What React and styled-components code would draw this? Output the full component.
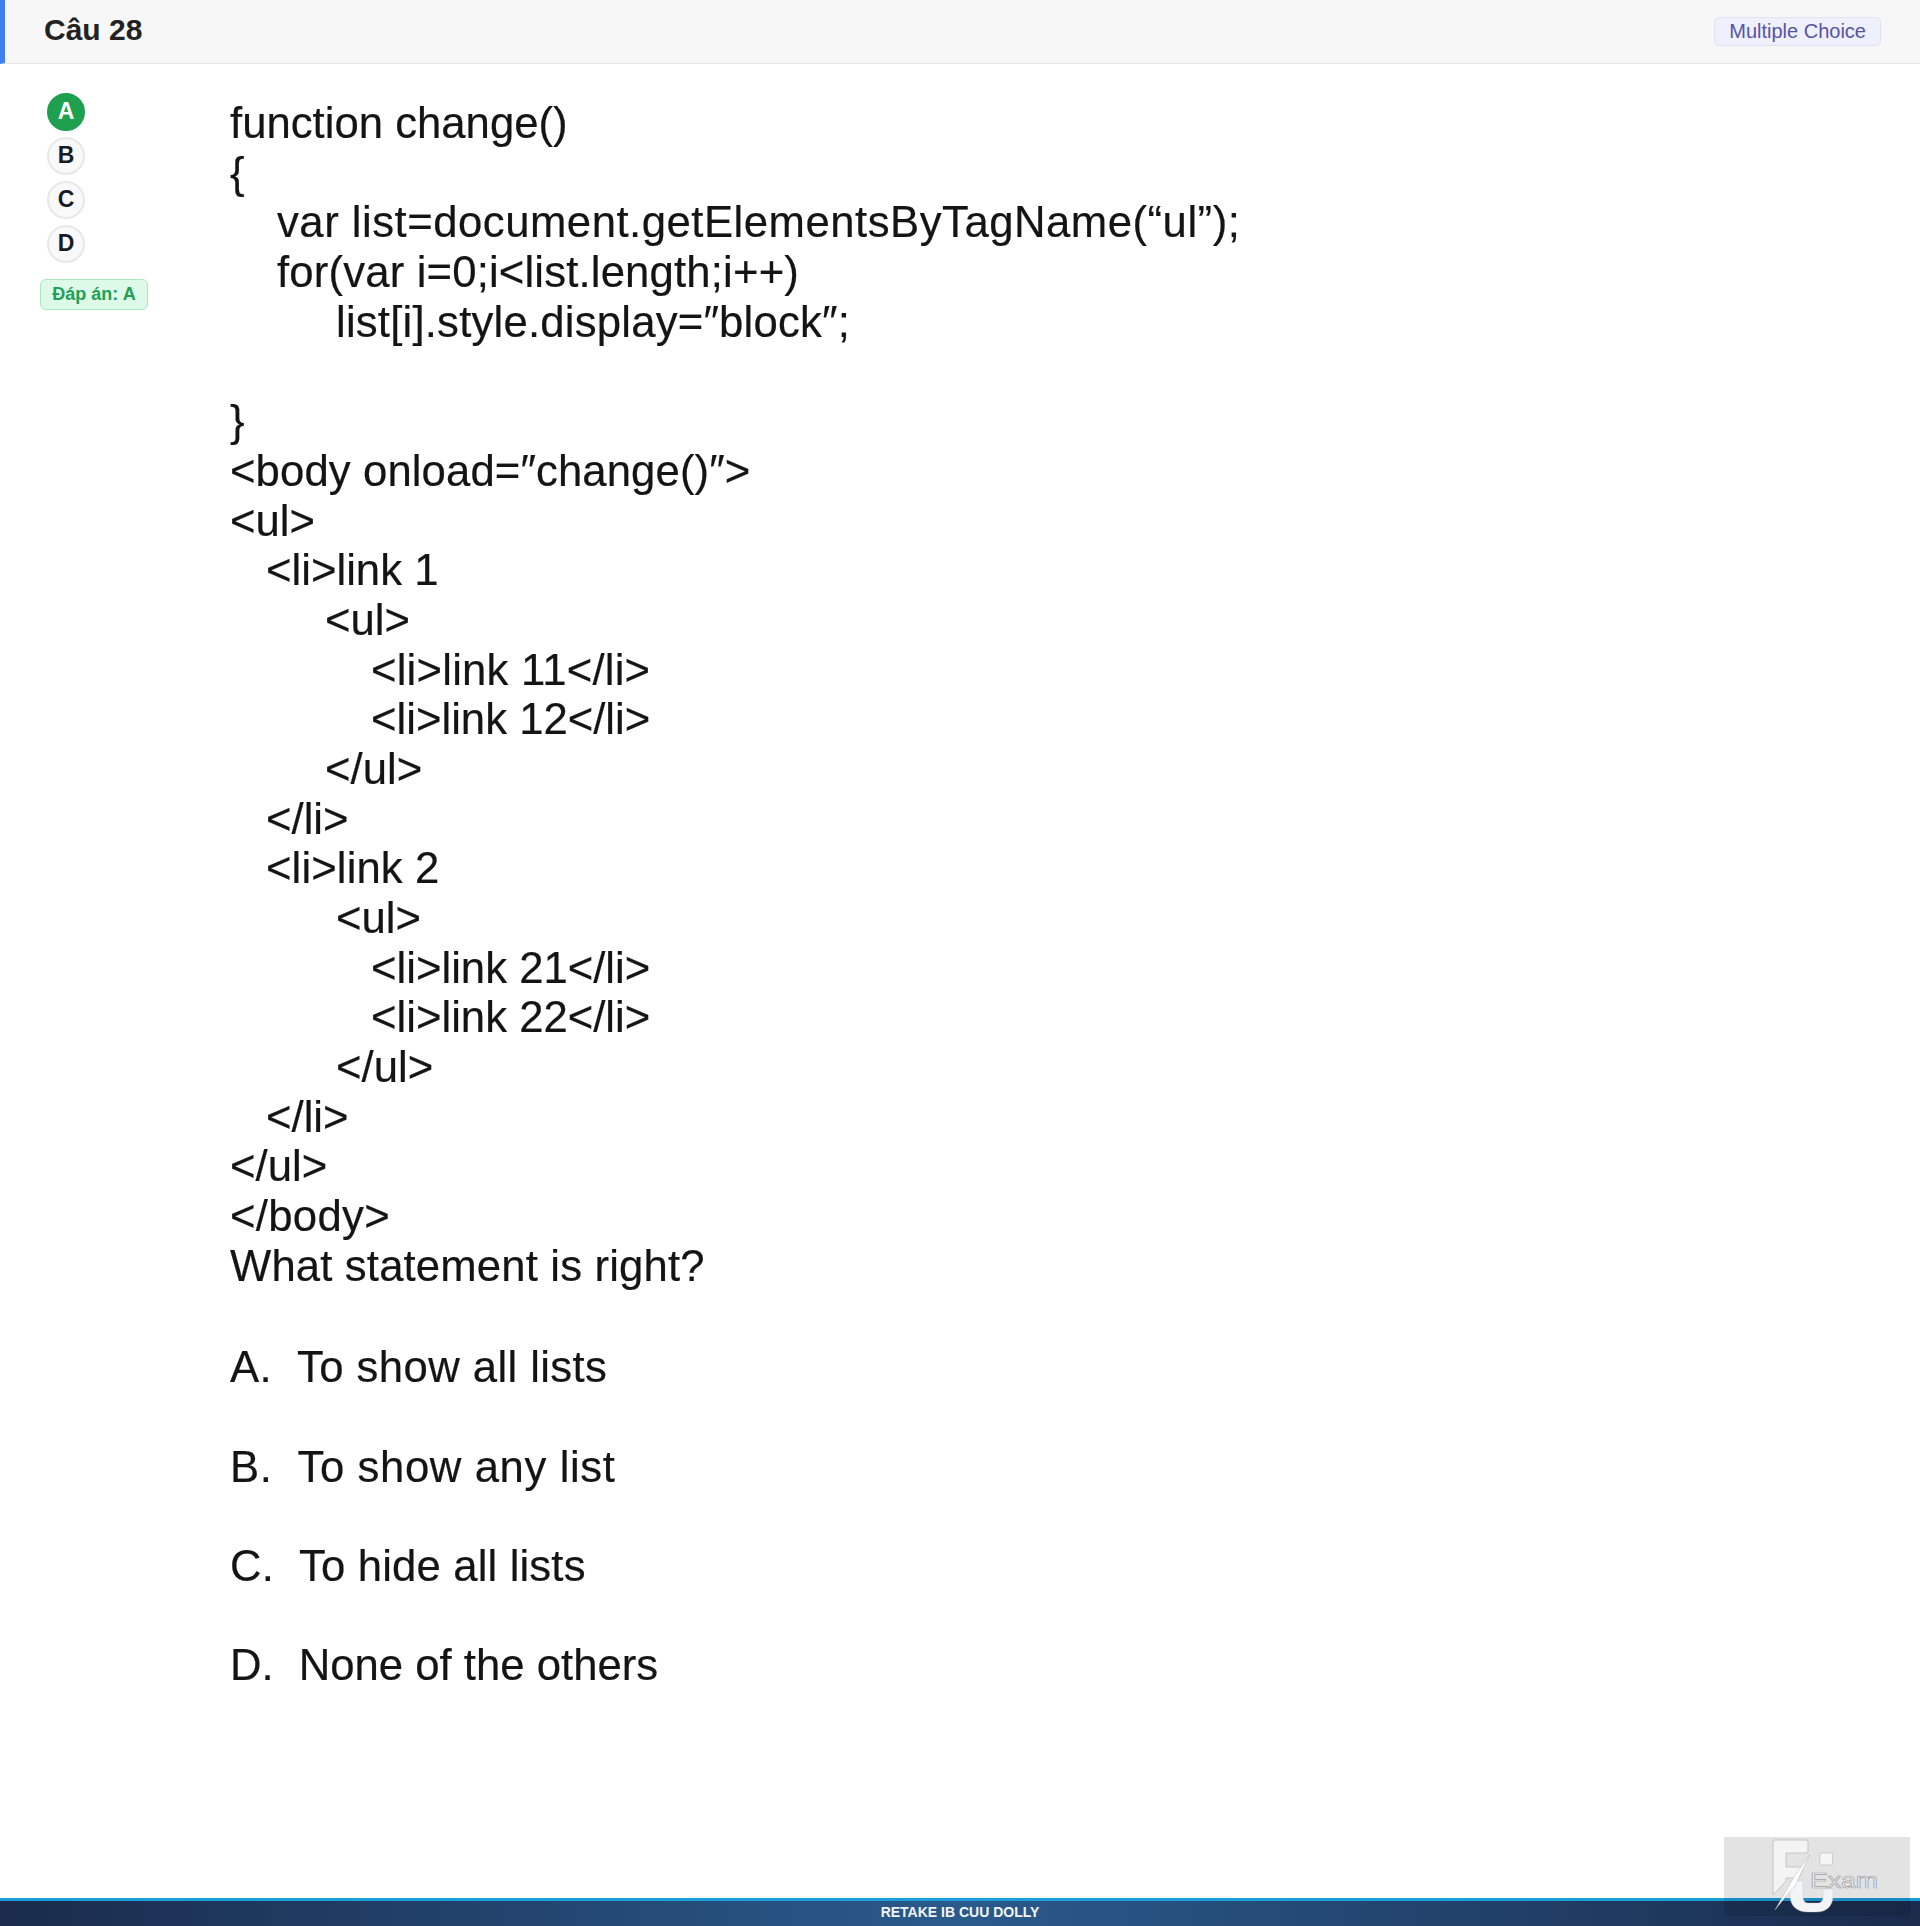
import styled, { createGlobalStyle } from 'styled-components';

const GlobalStyle = createGlobalStyle`
  html, body {
    margin: 0;
    padding: 0;
    background: #fff;
    font-family: 'Liberation Sans', Arial, sans-serif;
  }
`;

const Page = styled.div`
  position: relative;
  min-height: 100vh;
  display: flex;
  flex-direction: column;
`;
const Header = styled.header`
  height: 63px;
  display: flex;
  align-items: center;
  justify-content: space-between;
  padding: 0 39px;
  background: #f7f7f7;
  border-left: 5px solid #3f7fee;
  border-bottom: 1px solid #e6e6e6;
`;
const Title = styled.h2`
  margin: 0 0 3px;
  font-size: 30px;
  font-weight: 700;
  color: #222;
`;
const TypeBadge = styled.span`
  padding: 2px 14px;
  font-size: 20px;
  line-height: 23px;
  color: #5654a8;
  background: #eef0fb;
  border: 1px solid #dfe2f1;
  border-radius: 5px;
`;
const Body = styled.main`
  flex: 1;
  display: flex;
`;
const Side = styled.aside`
  width: 230px;
  flex: none;
  box-sizing: border-box;
  padding: 29px 0 0 40px;
`;
const Options = styled.div`
  display: flex;
  flex-direction: column;
  gap: 6px;
  margin-left: 7px;
`;
const Option = styled.div`
  width: 38px;
  height: 38px;
  box-sizing: border-box;
  display: flex;
  align-items: center;
  justify-content: center;
  padding-bottom: 2px;
  border-radius: 50%;
  font-size: 23px;
  font-weight: 700;
  color: ${(props) => (props.correct ? '#fff' : '#161b26')};
  background: ${(props) => (props.correct ? '#1ea04f' : '#f9f9f9')};
  border: 2px solid ${(props) => (props.correct ? '#1ea04f' : '#e8e8e8')};
`;
const Answer = styled.div`
  width: 108px;
  height: 31px;
  box-sizing: border-box;
  margin-top: 16px;
  display: flex;
  align-items: center;
  justify-content: center;
  font-size: 18px;
  font-weight: 700;
  color: #1f9f57;
  background: #dcfae7;
  border: 1px solid #a9e8c2;
  border-radius: 6px;
`;
const Question = styled.section`
  padding-top: 34px;
  color: #141414;
  font-size: 43.7px;
  line-height: 49.69px;
  -webkit-text-stroke: 0.2px #141414;
  filter: blur(0.7px);
`;
const Line = styled.div`
  height: 49.69px;
  padding-left: ${(props) => props.indent || 0}px;
  letter-spacing: ${(props) => props.spread || 0}px;
  white-space: pre;
`;
const Choices = styled.div`
  margin-top: 2px;
`;
const Marker = styled.span`
  margin-right: 25px;
`;
const Footer = styled.footer`
  height: 22px;
  padding-bottom: 3px;
  display: flex;
  align-items: center;
  justify-content: center;
  border-top: 3px solid #1b9fdc;
  background: linear-gradient(90deg, #1a2b4c 0%, #2a5a8c 50%, #1a2b4c 100%);
  color: #f2f6fa;
  font-size: 14px;
  font-weight: 700;
`;
const Watermark = styled.div`
  position: absolute;
  left: 1724px;
  top: 1837px;
  width: 186px;
  height: 79px;
  background: rgba(0, 0, 0, 0.11);
`;
const LogoMark = styled.svg`
  display: block;
  overflow: visible;
`;

const CODE = [
  ['function change()'],
  ['{'],
  ['var list=document.getElementsByTagName(“ul”);', 47, 0.5],
  ['for(var i=0;i<list.length;i++)', 47, 0.16],
  ['list[i].style.display=″block″;', 106, 0.2],
  [''],
  ['}'],
  ['<body onload=″change()″>', 0, 0.1],
  ['<ul>'],
  ['<li>link 1', 36],
  ['<ul>', 95],
  ['<li>link 11</li>', 141, 0.2],
  ['<li>link 12</li>', 141],
  ['</ul>', 95],
  ['</li>', 36],
  ['<li>link 2', 36, 0.1],
  ['<ul>', 106],
  ['<li>link 21</li>', 141],
  ['<li>link 22</li>', 141],
  ['</ul>', 106],
  ['</li>', 36],
  ['</ul>'],
  ['</body>', 0, 0.3],
  ['What statement is right?', 0, 0.15],
  [''],
];

const CHOICES = [
  ['A.', 'To show all lists', 0.4],
  ['B.', 'To show any list', 0.6],
  ['C.', 'To hide all lists', 0.15],
  ['D.', 'None of the others', 0],
];

const Logo = () => (
  <LogoMark width="186" height="79" viewBox="0 0 186 79">
    <path
      d="M66 44V58C66 69 73 75 84 75H92C103 75 109 69 109 58V52H99V60C99 64 97 66 93 66H85C81 66 79 64 79 60V44Z"
      fill="#f2f4f6"
      stroke="#c4c4c4"
      strokeWidth="0.4"
    />
    <path
      d="M51 3H82Q84 3 84 5V14Q84 16 82 16H62V30H78Q80 30 79 32L75 41H62V44L49 58V5Q49 3 51 3Z"
      fill="#f4f4f5"
      stroke="#b5b5b5"
      strokeWidth="0.7"
    />
    <path d="M86 17L72 47L51 73L70 40Z" fill="#fff" stroke="#aaa" strokeWidth="0.4" />
    <rect x="96" y="16" width="12.5" height="12" rx="1" fill="#f5f5f5" stroke="#bbb" strokeWidth="0.6" />
    <text
      x="86"
      y="51"
      fontFamily="Liberation Sans, sans-serif"
      fontSize="22.5"
      fill="#f0f0f0"
      stroke="#a0a0a0"
      strokeWidth="0.7"
      textLength="68"
      lengthAdjust="spacingAndGlyphs"
    >
      Exam
    </text>
  </LogoMark>
);

export default function App() {
  return (
    <Page>
      <GlobalStyle />
      <Header>
        <Title>Câu 28</Title>
        <TypeBadge>Multiple Choice</TypeBadge>
      </Header>
      <Body>
        <Side>
          <Options>
            <Option correct>A</Option>
            <Option>B</Option>
            <Option>C</Option>
            <Option>D</Option>
          </Options>
          <Answer>Đáp án: A</Answer>
        </Side>
        <Question>
          {CODE.map(([text, indent, spread], i) => (
            <Line key={i} indent={indent} spread={spread}>
              {text}
            </Line>
          ))}
          <Choices>
            {CHOICES.map(([mark, text, spread]) => (
              <div key={mark}>
                <Line spread={spread}>
                  <Marker>{mark}</Marker>
                  {text}
                </Line>
                <Line />
              </div>
            ))}
          </Choices>
        </Question>
      </Body>
      <Footer>RETAKE IB CUU DOLLY</Footer>
      <Watermark>
        <Logo />
      </Watermark>
    </Page>
  );
}
